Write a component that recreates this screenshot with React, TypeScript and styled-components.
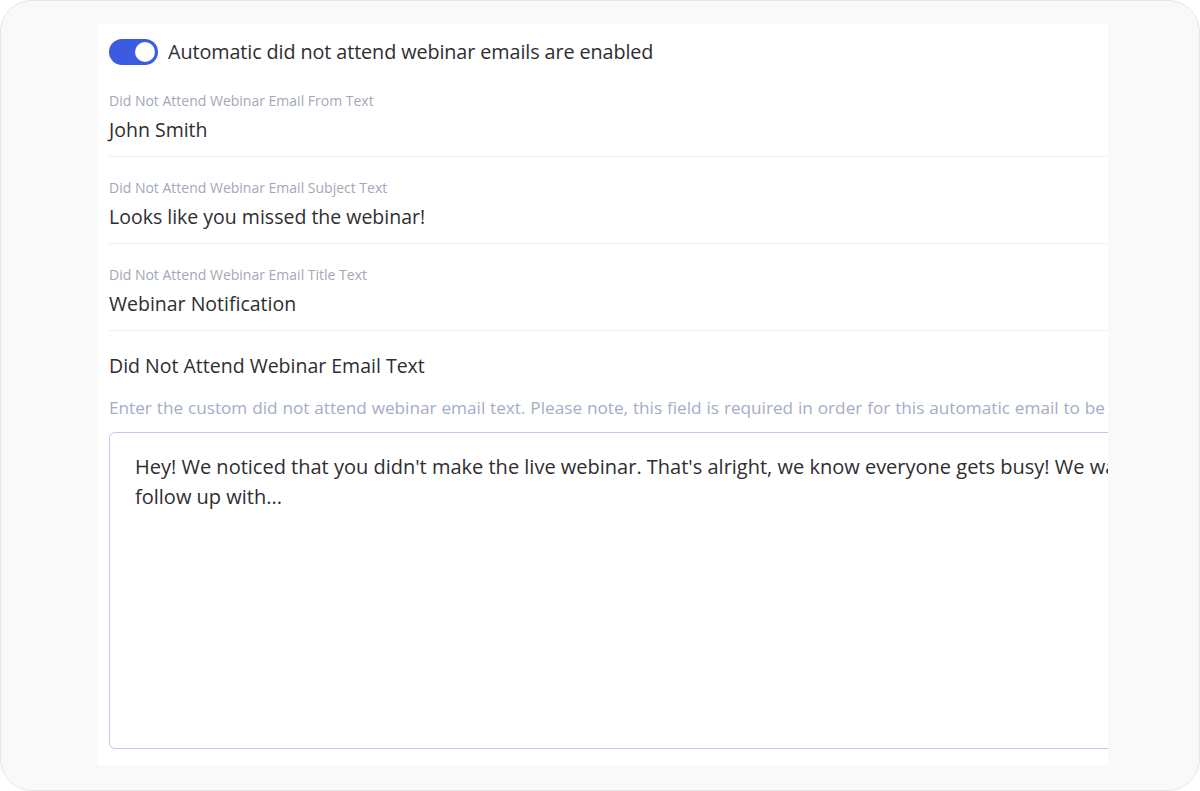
import React from "react";
import styled, { createGlobalStyle } from "styled-components";

const GlobalStyle = createGlobalStyle`
  html, body {
    margin: 0;
    padding: 0;
    background: #ffffff;
  }
  body {
    font-family: "Open Sans", "Noto Sans", sans-serif;
    color: #2e2e32;
  }
`;

const Frame = styled.div`
  box-sizing: border-box;
  width: 1200px;
  height: 791px;
  border: 1px solid #e6e6e8;
  border-radius: 32px;
  background: #f9f9fa;
  padding: 23px 91px 25px 96px;
  overflow: hidden;
`;

const Panel = styled.div`
  height: 100%;
  background: #ffffff;
  overflow: hidden;
  padding: 14px 0 0 12px;
  box-sizing: border-box;
`;

const ToggleRow = styled.div`
  display: flex;
  align-items: center;
  gap: 10px;
  height: 27px;
  white-space: nowrap;
`;

const Switch = styled.div<{ $on: boolean }>`
  flex: none;
  width: 49px;
  height: 26px;
  border-radius: 13px;
  background: ${(p) => (p.$on ? "#3a5be2" : "#d5d8e0")};
  display: flex;
  align-items: center;
  justify-content: ${(p) => (p.$on ? "flex-end" : "flex-start")};
  padding: 0 3px;
  box-sizing: border-box;
`;

const Knob = styled.div`
  width: 20px;
  height: 20px;
  border-radius: 50%;
  background: #ffffff;
`;

const ToggleText = styled.span`
  font-size: 19.8px;
  letter-spacing: -0.1px;
  color: #2e2e32;
`;

const Field = styled.div`
  border-bottom: 1px solid #f0f0f2;
  padding: 28px 0 13px;
  white-space: nowrap;
  & + & {
    padding-top: 23px;
  }
`;

const Label = styled.div`
  font-size: 14px;
  line-height: 16px;
  color: #a4a8b6;
`;

const Value = styled.div`
  font-size: 19.5px;
  line-height: 26px;
  margin-top: 8px;
  color: #2e2e32;
`;

const Heading = styled.div`
  margin-top: 22px;
  font-size: 19.5px;
  line-height: 26px;
  color: #2e2e32;
  white-space: nowrap;
`;

const Help = styled.div`
  margin-top: 18px;
  font-size: 17.2px;
  line-height: 22px;
  word-spacing: 0.4px;
  color: #a5adc6;
  white-space: nowrap;
`;

const TextBox = styled.div`
  margin-top: 13px;
  width: 1200px;
  height: 317px;
  box-sizing: border-box;
  border: 1.5px solid #c3cbea;
  border-radius: 6px;
  padding: 19px 25px;
  font-size: 20px;
  line-height: 30px;
  color: #2e2e32;
  white-space: pre;
`;

const fields = [
  { label: "Did Not Attend Webinar Email From Text", value: "John Smith" },
  { label: "Did Not Attend Webinar Email Subject Text", value: "Looks like you missed the webinar!" },
  { label: "Did Not Attend Webinar Email Title Text", value: "Webinar Notification" },
];

const App: React.FC = () => {
  return (
    <>
      <GlobalStyle />
      <Frame>
        <Panel>
          <ToggleRow>
            <Switch $on>
              <Knob />
            </Switch>
            <ToggleText>Automatic did not attend webinar emails are enabled</ToggleText>
          </ToggleRow>
          {fields.map((f) => (
            <Field key={f.label}>
              <Label>{f.label}</Label>
              <Value>{f.value}</Value>
            </Field>
          ))}
          <Heading>Did Not Attend Webinar Email Text</Heading>
          <Help>
            Enter the custom did not attend webinar email text. Please note, this field is required in order for this automatic email to be sent.
          </Help>
          <TextBox>
            {"Hey! We noticed that you didn't make the live webinar. That's alright, we know everyone gets busy! We wanted to\nfollow up with..."}
          </TextBox>
        </Panel>
      </Frame>
    </>
  );
};

export default App;
